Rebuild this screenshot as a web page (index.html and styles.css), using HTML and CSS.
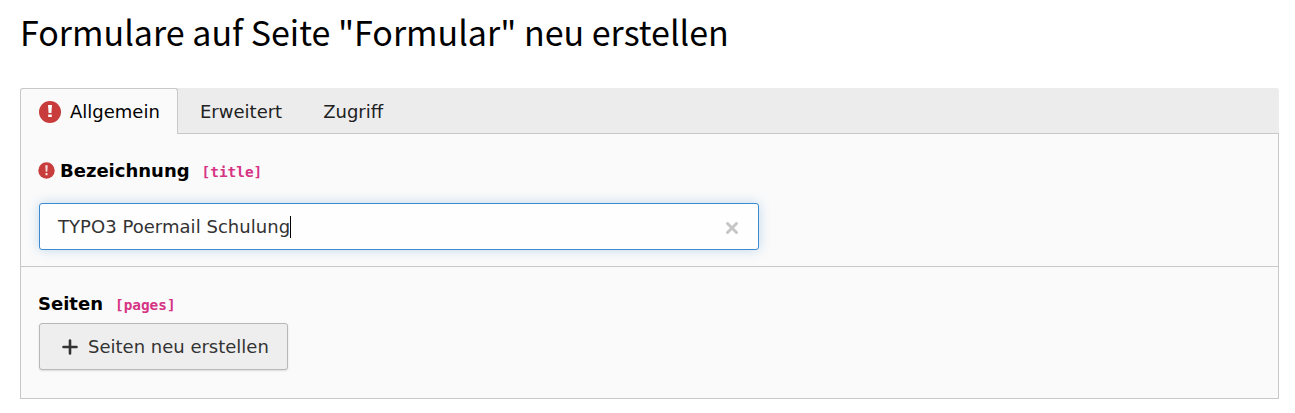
FILE: index.html
```html
<!DOCTYPE html>
<html lang="de">
<head>
    <meta charset="UTF-8">
    <meta name="viewport" content="width=device-width, initial-scale=1.0">
    <title>Formulare neu erstellen</title>
    <link rel="stylesheet" href="styles.css">
</head>
<body>
    <h1>Formulare auf Seite "Formular" neu erstellen</h1>

    <ul class="nav-tabs">
        <li class="tab active">
            <svg class="icon-error" width="22" height="22" viewBox="0 0 22 22">
                <circle cx="11" cy="11" r="11" fill="#c83c3c"/>
                <path d="M9 4h4l-.6 8H9.600zM9.200 13.500h3.600V16H9.200z" fill="#fff"/>
            </svg>
            <span>Allgemein</span>
        </li>
        <li class="tab">Erweitert</li>
        <li class="tab">Zugriff</li>
    </ul>

    <div class="tab-content">
        <div class="form-section">
            <div class="form-label">
                <svg class="icon-required" width="17" height="17" viewBox="0 0 17 17">
                    <circle cx="8.500" cy="8.500" r="8.200" fill="#c83c3c"/>
                    <path d="M7.300 3.200h2.400l-.4 6.500H7.700zM7.500 11h2v2.200h-2z" fill="#f6dede"/>
                </svg>
                <span class="label-text">Bezeichnung</span>
                <code>[title]</code>
            </div>
            <div class="form-control">
                <span class="value">TYPO3 Poermail Schulung</span>
                <span class="caret"></span>
                <svg class="icon-clear" width="14" height="14" viewBox="0 0 14 14">
                    <path d="M2.500 2.500l9 9M11.500 2.500l-9 9" stroke="#c6c6c6" stroke-width="3" stroke-linecap="round"/>
                </svg>
            </div>
        </div>
        <div class="form-section">
            <div class="form-label">
                <span class="label-text">Seiten</span>
                <code>[pages]</code>
            </div>
            <button type="button" class="btn">
                <svg width="16" height="16" viewBox="0 0 16 16">
                    <path d="M8 1.500v13M1.500 8h13" stroke="#333" stroke-width="2.600" stroke-linecap="round"/>
                </svg>
                <span>Seiten neu erstellen</span>
            </button>
        </div>
    </div>
</body>
</html>
```
FILE: styles.css
```css
* {
    box-sizing: border-box;
    margin: 0;
    padding: 0;
}

body {
    font-family: "DejaVu Sans", Verdana, sans-serif;
    font-size: 18px;
    line-height: 27px;
    color: #212121;
    background: #fff;
    padding: 7px 16px 0 20px;
}

h1 {
    font-family: "Noto Sans CJK SC", "Source Sans Pro", sans-serif;
    font-size: 34px;
    font-weight: 400;
    line-height: 50px;
    color: #000;
    white-space: nowrap;
    margin-bottom: 31px;
}

.nav-tabs {
    display: flex;
    height: 46px;
    list-style: none;
    background: #ececec;
    border-bottom: 1px solid #c8c8c8;
    border-radius: 3px 3px 0 0;
}

.tab {
    display: flex;
    align-items: center;
    height: 46px;
    padding: 1px 19px 0 22px;
}

.tab.active {
    width: 158px;
    padding: 0 0 0 18px;
    color: #000;
    background: #fafafa;
    border: 1px solid #c8c8c8;
    border-bottom: 0;
    border-radius: 3px 3px 0 0;
}

.icon-error {
    margin-right: 9px;
}

.tab-content {
    background: #fafafa;
    border: 1px solid #c8c8c8;
    border-top: 0;
    height: 265px;
}

.form-section {
    height: 132px;
    padding: 23px 18px 0;
}

.form-section + .form-section {
    border-top: 1px solid #c8c8c8;
}

.form-label {
    display: flex;
    align-items: center;
    height: 27px;
    margin-left: -1px;
}

.label-text {
    font-weight: 700;
    color: #000;
}

.icon-required {
    margin-right: 5px;
}

code {
    font-family: "DejaVu Sans Mono", monospace;
    font-size: 14.400px;
    font-weight: 700;
    color: #d63384;
    margin: 3px 0 0 12px;
}

.form-control {
    display: flex;
    align-items: center;
    width: 720px;
    height: 47px;
    margin-top: 19px;
    padding: 0 19px 0 18px;
    color: #333;
    background: #fefefe;
    border: 1px solid #3c8bd0;
    border-radius: 3px;
    box-shadow: 0 0 12px rgba(60, 139, 208, 0.3);
}

.value {
    letter-spacing: 0.040px;
}

.caret {
    width: 1px;
    height: 22px;
    background: #000;
}

.icon-clear {
    margin: 3px 0 0 auto;
}

.btn {
    display: flex;
    align-items: center;
    width: 249px;
    height: 47px;
    margin-top: 6px;
    padding-left: 22px;
    gap: 10px;
    font: inherit;
    color: #333;
    background: #eee;
    border: 1px solid #b8b8b8;
    border-radius: 3px;
    box-shadow: 0 1px 2px rgba(0, 0, 0, 0.12);
    white-space: nowrap;
}
```
